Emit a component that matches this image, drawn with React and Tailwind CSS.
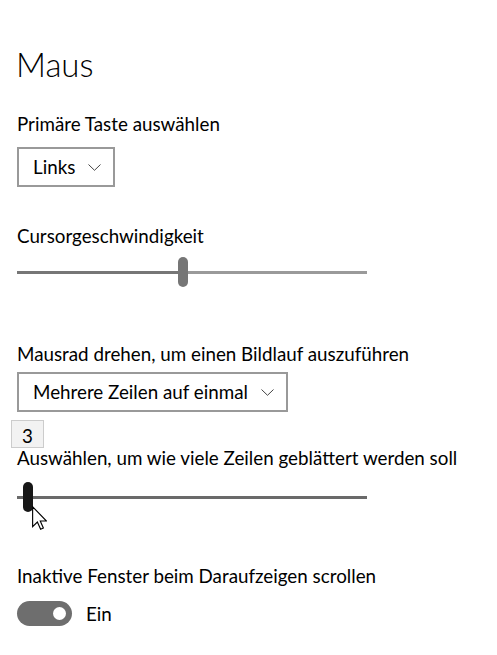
function Chevron() {
  return (
    <svg width="13" height="7" viewBox="0 0 13 7" fill="none" className="shrink-0">
      <path d="M0.5 0.5 L6.5 6.3 L12.5 0.5" stroke="#444" strokeWidth="1" />
    </svg>
  );
}

function Dropdown({ value }) {
  return (
    <div className="inline-flex h-10 items-center gap-[13px] self-start border-2 border-[#999] bg-white pl-[14px] pr-[12px]">
      <span>{value}</span>
      <Chevron />
    </div>
  );
}

function Slider({ filled, thumbAt, rest, thumb, children }) {
  return (
    <div className="relative flex h-[30px] w-[350px] items-center">
      <div className={`h-[3px] ${filled}`} style={{ width: thumbAt }} />
      <div className={`h-[30px] w-[10px] shrink-0 rounded-full ${thumb}`} />
      <div className={`h-[3px] flex-1 ${rest}`} />
      {children}
    </div>
  );
}

function Cursor() {
  // Windows arrow pointer
  return (
    <svg
      width="15"
      height="24"
      viewBox="0 0 12 19"
      className="absolute left-[15px] top-[24px]"
    >
      <path
        d="M0.5 0.5 V16.4 L4.3 12.7 L6.9 18.5 L9.1 17.5 L6.6 11.9 H11.6 Z"
        fill="#fff"
        stroke="#000"
        strokeWidth="0.9"
        strokeLinejoin="miter"
      />
    </svg>
  );
}

export default function App() {
  return (
    <div className="flex h-[655px] w-full flex-col bg-white pl-[17px] font-['Lato',sans-serif] text-[18.8px] leading-6 text-black">
      <h1 className="mt-[44px] -ml-px text-[33px] font-light leading-10">Maus</h1>

      <p className="mt-[28px]">Primäre Taste auswählen</p>
      <div className="mt-[11px] flex">
        <Dropdown value="Links" />
      </div>

      <p className="mt-[37px]">Cursorgeschwindigkeit</p>
      <div className="mt-[9px]">
        <Slider filled="bg-[#767676]" thumbAt={161} rest="bg-[#9a9a9a]" thumb="bg-[#767676]" />
      </div>

      <p className="mt-[55px]">Mausrad drehen, um einen Bildlauf auszuführen</p>
      <div className="mt-[6px] flex">
        <Dropdown value="Mehrere Zeilen auf einmal" />
      </div>

      <div className="relative mt-[34px]">
        <p>Auswählen, um wie viele Zeilen geblättert werden soll</p>
        <div className="absolute -left-[6px] -top-[26px] flex h-[28px] w-[33px] justify-center border border-[#cccccc] bg-[#f2f2f2] pt-[3px]">
          3
        </div>
      </div>
      <div className="mt-[12px]">
        <Slider filled="bg-[#6a6a6a]" thumbAt={6} rest="bg-[#6a6a6a]" thumb="bg-[#171717]">
          <Cursor />
        </Slider>
      </div>

      <p className="mt-[52px]">Inaktive Fenster beim Daraufzeigen scrollen</p>
      <div className="mt-[13px] flex items-center gap-[14px]">
        <div className="flex h-[25px] w-[55px] items-center justify-end rounded-full bg-[#6e6e6e] pr-[6px]">
          <div className="h-[13px] w-[13px] rounded-full bg-white" />
        </div>
        <span>Ein</span>
      </div>
    </div>
  );
}
